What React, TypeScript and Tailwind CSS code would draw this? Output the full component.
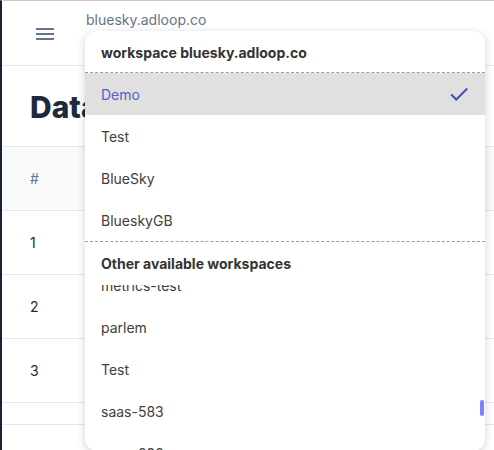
import React from "react";

const wsItems = ["Demo", "Test", "BlueSky", "BlueskyGB"];
const otherItems = ["metrics-test", "parlem", "Test", "saas-583", "saas-898", "saas-901"];

export default function App() {
  return (
    <div
      className="relative w-[494px] h-[450px] overflow-hidden bg-white border-t border-t-[#d6c6bf] border-l-2 border-l-[#1b2035]"
      style={{ fontFamily: "Inter, 'Noto Sans', sans-serif" }}
    >
      {/* header */}
      <div className="h-[65px] border-b border-[#e5e7eb] flex items-start">
        <div className="pl-[34px] pt-[27px] flex flex-col gap-[3px] w-[84px]">
          <span className="block w-[18px] h-[2px] bg-[#64748b]" />
          <span className="block w-[18px] h-[2px] bg-[#64748b]" />
          <span className="block w-[18px] h-[2px] bg-[#64748b]" />
        </div>
        <div className="pt-[9px] text-[14px] leading-[20px] text-[#64748b]">bluesky.adloop.co</div>
      </div>

      {/* page title */}
      <div className="h-[80px] pl-[28px] pt-[21px]">
        <h1 className="text-[30px] leading-[40px] font-extrabold text-[#1e293b]">Data</h1>
      </div>

      {/* table */}
      <div className="border-t border-[#e5e7eb]">
        <div className="h-[64px] bg-[#f8fafc] border-b border-[#e5e7eb] flex items-center pl-[28px] text-[14px] text-[#64748b]">#</div>
        {["1", "2", "3"].map((n) => (
          <div key={n} className="h-[64px] border-b border-[#e5e7eb] flex items-center pl-[28px] text-[14px] text-[#1e293b]">
            {n}
          </div>
        ))}
        <div className="h-[22px] border-b border-[#e5e7eb]" />
      </div>

      {/* dropdown overlay */}
      <div className="absolute left-[83px] top-[30px] w-[400px] h-[420px] bg-white rounded-xl shadow-[0_2px_8px_rgba(0,0,0,0.18)] overflow-hidden flex flex-col">
        <div className="h-[42px] shrink-0 flex items-center px-4 pt-[1px] text-[14px] font-bold text-[#333333] border-b border-dashed border-[#8fa3a3]">
          workspace bluesky.adloop.co
        </div>
        {wsItems.map((w, i) => (
          <div
            key={w}
            className={
              "h-[42px] shrink-0 flex items-center justify-between px-4 text-[14px] " +
              (i === 0 ? "bg-[#e0e0e0] text-[#5561c4]" : "text-[#404040]")
            }
          >
            <span>{w}</span>
            {i === 0 && (
              <svg width="22" height="22" viewBox="0 0 24 24" fill="none" stroke="#3f4fb8" strokeWidth="2.2" className="-mr-[1px]">
                <path d="M3.5 12.5l5.5 5.5L21 6" />
              </svg>
            )}
          </div>
        ))}
        <div className="h-[44px] shrink-0 px-4 pt-[12px] text-[14px] leading-[20px] font-bold text-[#333333] border-t border-dashed border-[#8fa3a3]">
          Other available workspaces
        </div>
        <div className="flex-1 overflow-hidden">
          <div className="-mt-[21px]">
            {otherItems.map((w, i) => (
              <div key={i} className="h-[42px] flex items-center px-4 text-[14px] text-[#404040]">
                {w}
              </div>
            ))}
          </div>
        </div>
        <div className="absolute right-[1px] top-[369px] w-[4px] h-[16px] rounded-full bg-[#8080ff]" />
      </div>
    </div>
  );
}
